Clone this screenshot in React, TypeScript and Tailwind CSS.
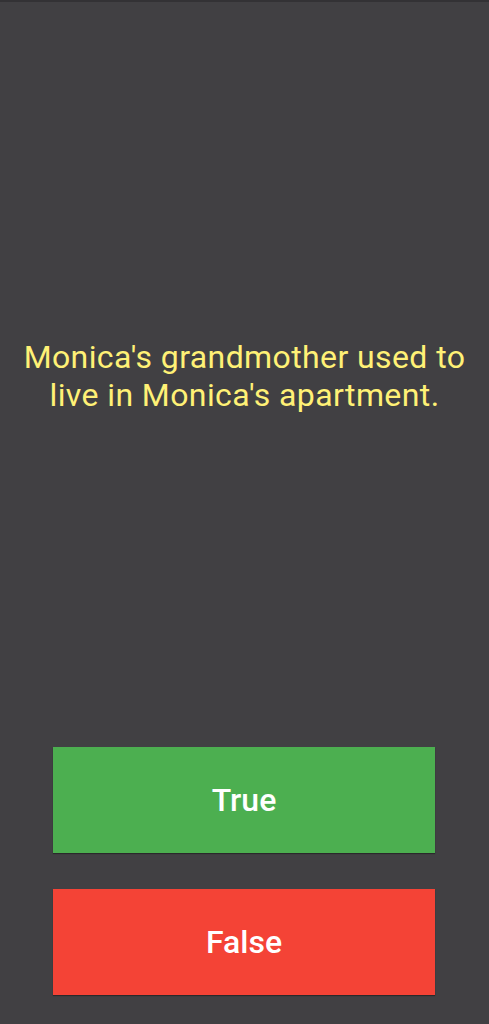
import React from 'react';

const App: React.FC = () => {
  const question = "Monica's grandmother used to live in Monica's apartment.";

  return (
    <div
      className="flex h-[1024px] w-full flex-col bg-[#414043]"
      style={{ fontFamily: 'Roboto, "Noto Sans", sans-serif' }}
    >
      <div className="h-[2px] w-full bg-[#333235]" />

      {/* Question */}
      <div className="flex flex-1 items-center justify-center px-3 pt-[4px]">
        <p className="text-center text-[32px] leading-[37.5px] tracking-[0.4px] text-[#fff176]">
          {question}
        </p>
      </div>

      {/* Answers */}
      <div className="flex flex-col items-start gap-[36px] pb-[29px] pl-[53px]">
        <button className="flex h-[106px] w-[382px] items-center justify-center bg-[#4caf50] text-[32px] font-medium text-white shadow-[0_1px_1px_rgba(0,0,0,0.35)]">
          True
        </button>
        <button className="flex h-[106px] w-[382px] items-center justify-center bg-[#f44336] text-[32px] font-medium text-white shadow-[0_1px_1px_rgba(0,0,0,0.35)]">
          False
        </button>
      </div>
    </div>
  );
};

export default App;
